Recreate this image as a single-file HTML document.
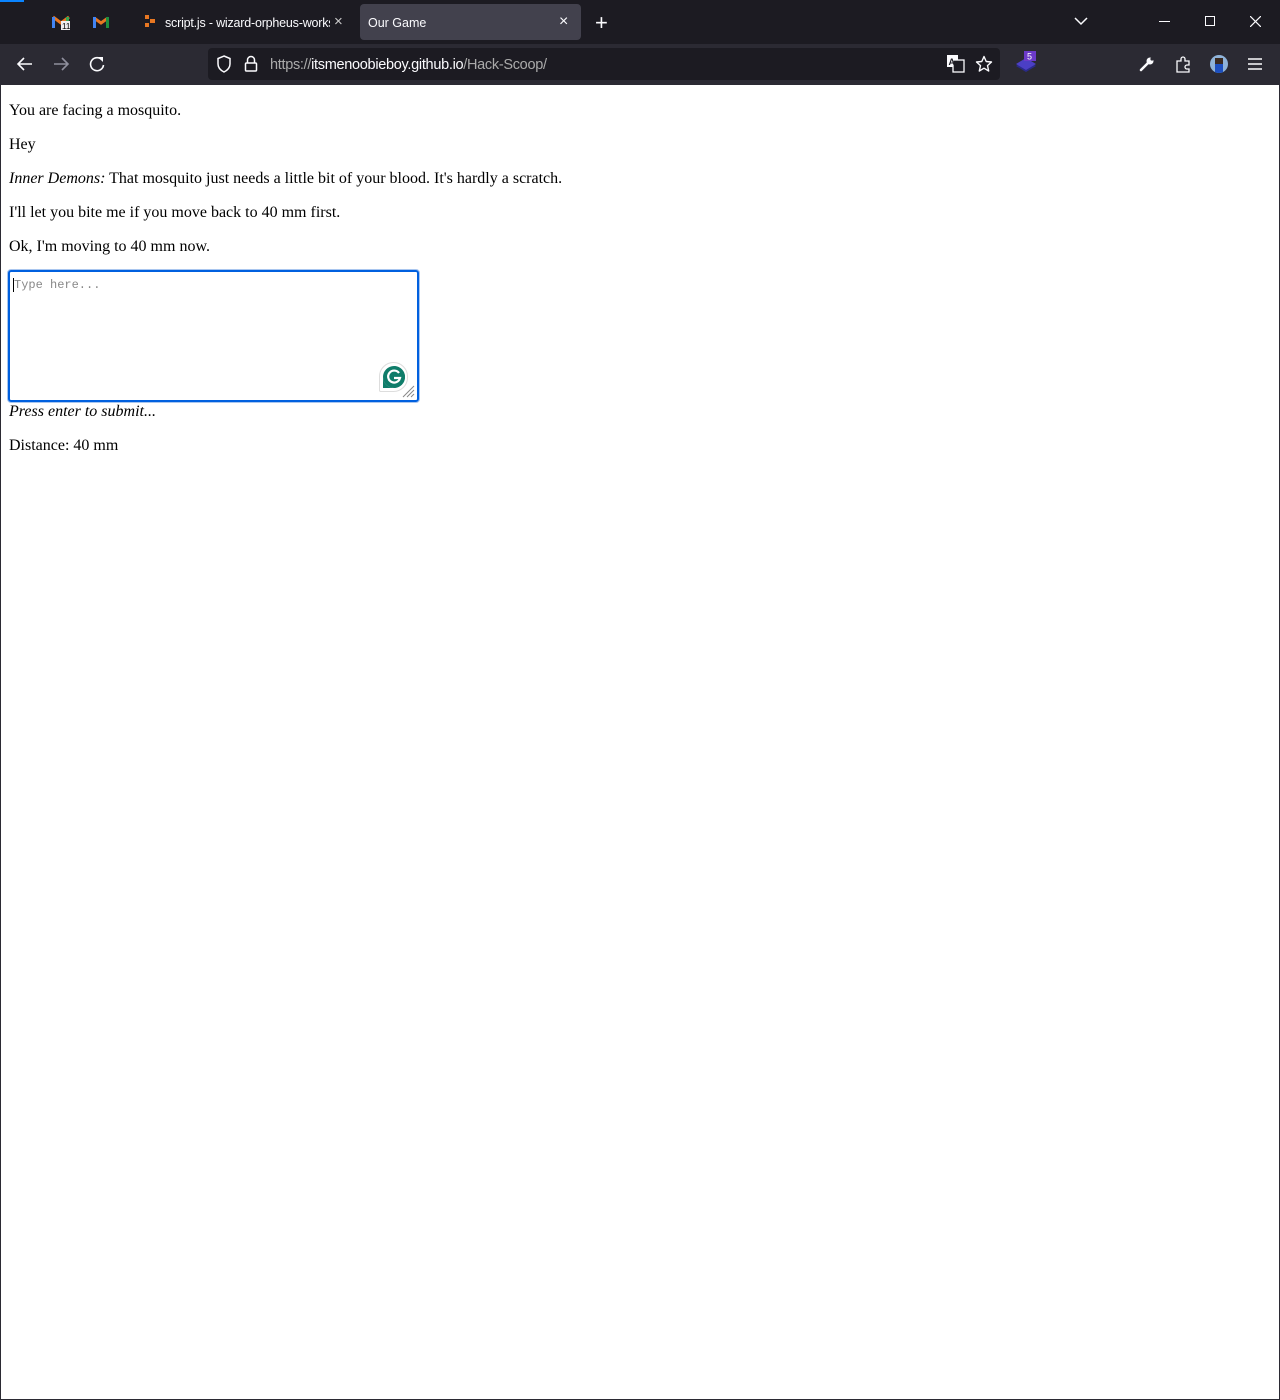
<!DOCTYPE html>
<html><head><meta charset="utf-8"><style>
*{box-sizing:border-box}
body{margin:0;width:1280px;height:1400px;position:relative;background:#fff;overflow:hidden;font-family:"Times New Roman","Liberation Serif",serif;font-size:16px}
.tabs{position:absolute;left:0;top:0;width:1280px;height:44px;background:#1c1b22}
.tool{position:absolute;left:0;top:44px;width:1280px;height:41px;background:#2b2a33}
.ui{font-family:"Liberation Sans",sans-serif;color:#fbfbfe;position:absolute}
.page{position:absolute;left:0;top:85px;width:1280px;height:1315px;border:1px solid #2b2a33;border-top:none}
.p{position:absolute;left:9px;line-height:18px;color:#000;white-space:nowrap}
</style></head><body>
<div class="tabs">
 <div style="position:absolute;left:0;top:0;width:24px;height:2px;background:#0a84ff"></div>
 <svg style="position:absolute;left:52px;top:14px" width="18" height="16"><path d="M1 3 L9 9 L17 3" stroke="#e87722" stroke-width="3" fill="none"/><rect x="0" y="3" width="3" height="11" fill="#4285f4"/><rect x="14" y="3" width="3" height="11" fill="#34a853"/><rect x="9" y="7" width="9" height="9" fill="#eee"/><text x="10" y="15" font-size="8" font-family="Liberation Sans">11</text></svg>
 <svg style="position:absolute;left:93px;top:15px" width="16" height="13"><path d="M1 3 L8 8 L15 3" stroke="#e87722" stroke-width="3" fill="none"/><rect x="0" y="2" width="3" height="11" fill="#4285f4"/><rect x="13" y="2" width="3" height="11" fill="#1e8e3e"/></svg>
 <svg style="position:absolute;left:145px;top:15px" width="12" height="12"><rect x="0" y="0" width="4" height="4" fill="#e87722"/><rect x="5" y="4" width="5" height="4" fill="#e87722"/><rect x="0" y="8" width="4" height="4" fill="#e87722"/></svg>
 <div class="ui" style="left:165px;top:16px;font-size:12.5px;width:165px;overflow:hidden;white-space:nowrap;letter-spacing:-0.2px">script.js - wizard-orpheus-works</div>
 <div class="ui" style="left:334px;top:13px;font-size:15px;color:#ccc">×</div>
 <div style="position:absolute;left:360px;top:4px;width:221px;height:36px;background:#42414d;border-radius:4px"></div>
 <div class="ui" style="left:368px;top:16px;font-size:12.5px">Our Game</div>
 <div class="ui" style="left:559px;top:13px;font-size:16px">×</div>
 <div class="ui" style="left:595px;top:10px;font-size:22px;font-weight:300">+</div>
 <svg style="position:absolute;left:1074px;top:17px" width="14" height="9"><path d="M1 1 L7 7 L13 1" stroke="#fbfbfe" stroke-width="1.5" fill="none"/></svg>
 <div style="position:absolute;left:1159px;top:21px;width:11px;height:1px;background:#fbfbfe"></div>
 <div style="position:absolute;left:1205px;top:16px;width:10px;height:10px;border:1px solid #fbfbfe"></div>
 <svg style="position:absolute;left:1250px;top:16px" width="11" height="11"><path d="M0 0 L11 11 M11 0 L0 11" stroke="#fbfbfe" stroke-width="1.2"/></svg>
</div>
<div class="tool">
 <svg style="position:absolute;left:16px;top:12px" width="18" height="16"><path d="M16 8 H2 M8 2 L2 8 L8 14" stroke="#fbfbfe" stroke-width="1.6" fill="none"/></svg>
 <svg style="position:absolute;left:52px;top:12px" width="18" height="16"><path d="M2 8 H16 M10 2 L16 8 L10 14" stroke="#8f8f9d" stroke-width="1.6" fill="none"/></svg>
 <svg style="position:absolute;left:88px;top:11px" width="18" height="18"><path d="M14 5 A6.5 6.5 0 1 0 15.5 10" stroke="#fbfbfe" stroke-width="1.6" fill="none"/><path d="M10 2 L15 2 L15 7 Z" fill="#fbfbfe"/></svg>
 <div style="position:absolute;left:208px;top:4px;width:792px;height:32px;background:#1c1b22;border-radius:4px"></div>
 <svg style="position:absolute;left:216px;top:11px" width="16" height="18"><path d="M8 1 L14 3.5 V9 C14 13 11 15.5 8 17 C5 15.5 2 13 2 9 V3.5 Z" stroke="#fbfbfe" stroke-width="1.5" fill="none"/></svg>
 <svg style="position:absolute;left:244px;top:11px" width="14" height="18"><path d="M3.5 8 V5 A3.5 3.5 0 0 1 10.5 5 V8" stroke="#fbfbfe" stroke-width="1.5" fill="none"/><rect x="1.5" y="8" width="11" height="8" rx="1" stroke="#fbfbfe" stroke-width="1.5" fill="none"/></svg>
 <div class="ui" style="left:270px;top:13px;font-size:14.5px;color:#aaa;white-space:nowrap;letter-spacing:-0.3px">https://<span style="color:#fbfbfe">itsmenoobieboy.github.io</span>/Hack-Scoop/</div>
 <svg style="position:absolute;left:947px;top:11px" width="18" height="18"><rect x="0" y="0" width="11" height="12" fill="#fbfbfe"/><rect x="6" y="5" width="11" height="12" fill="#1c1b22" stroke="#fbfbfe" stroke-width="1.3"/><text x="1.5" y="10" font-size="9" font-weight="bold" fill="#1c1b22" font-family="Liberation Sans">A</text></svg>
 <svg style="position:absolute;left:975px;top:11px" width="18" height="18"><path d="M9 1.5 L11.2 6.5 L16.5 7 L12.5 10.6 L13.7 16 L9 13.2 L4.3 16 L5.5 10.6 L1.5 7 L6.8 6.5 Z" stroke="#fbfbfe" stroke-width="1.4" fill="none" stroke-linejoin="round"/></svg>
 <svg style="position:absolute;left:1014px;top:6px" width="24" height="24"><path d="M2 16 L12 10 L22 16 L12 22 Z" fill="#2a2a8a"/><path d="M2 14 L12 8 L22 14 L12 20 Z" fill="#4b3fc5"/><rect x="10" y="1" width="12" height="10" fill="#6c3ac9"/><text x="13" y="9.5" font-size="9" fill="#fff" font-family="Liberation Sans">5</text></svg>
 <svg style="position:absolute;left:1139px;top:12px" width="16" height="16"><path d="M2 14 L9 7" stroke="#fbfbfe" stroke-width="2.5" stroke-linecap="round"/><circle cx="11" cy="5" r="3.5" fill="#fbfbfe"/><circle cx="13" cy="3" r="1.6" fill="#2b2a33"/></svg>
 <svg style="position:absolute;left:1176px;top:11px" width="16" height="18"><path d="M1 6 H5 V4 A2 2 0 0 1 9 4 V6 H13 V10 H11 A2 2 0 0 0 11 14 H13 V17 H1 Z" stroke="#fbfbfe" stroke-width="1.3" fill="none"/></svg>
 <div style="position:absolute;left:1210px;top:11px;width:18px;height:18px;border-radius:50%;background:#8fb3d9;overflow:hidden"><div style="position:absolute;left:5px;top:8px;width:8px;height:10px;background:#1c4fbf"></div><div style="position:absolute;left:5px;top:3px;width:8px;height:6px;background:#3a2a20"></div></div>
 <svg style="position:absolute;left:1248px;top:14px" width="14" height="12"><path d="M0 1 H14 M0 6 H14 M0 11 H14" stroke="#fbfbfe" stroke-width="1.4"/></svg>
</div>
<div class="page"></div>
<div class="p" style="top:102px">You are facing a mosquito.</div>
<div class="p" style="top:136px">Hey</div>
<div class="p" style="top:170px"><i>Inner Demons:</i> That mosquito just needs a little bit of your blood. It's hardly a scratch.</div>
<div class="p" style="top:204px">I'll let you bite me if you move back to 40 mm first.</div>
<div class="p" style="top:238px">Ok, I'm moving to 40 mm now.</div>
<div style="position:absolute;left:7px;top:269px;width:413px;height:134px;border:1px solid #a9c6ef;border-radius:4px"></div>
<div style="position:absolute;left:8px;top:270px;width:411px;height:132px;border:2px solid #0060df;border-radius:3px;background:#fff"></div>
<div style="position:absolute;left:13px;top:278px;font-family:'Liberation Mono',monospace;font-size:12px;color:#888;border-left:1px solid #000;padding-left:0">Type here...</div>
<div style="position:absolute;left:379px;top:362px;width:29px;height:30px;border:1px solid #ddd;border-radius:15px 15px 15px 2px;background:#fff"></div>
<svg style="position:absolute;left:382px;top:365px" width="24" height="24"><path d="M12 1 A11 11 0 1 1 1 12 V23 H12" fill="#0f7d6a"/><circle cx="12" cy="12" r="11" fill="#0f7d6a"/><path d="M17 8 A6 6 0 1 0 18 13 H12" stroke="#fff" stroke-width="2.2" fill="none"/></svg>
<svg style="position:absolute;left:400px;top:383px" width="15" height="15"><path d="M14 3 L3 14 M14 7 L7 14 M14 11 L11 14" stroke="#888" stroke-width="1"/></svg>
<div class="p" style="top:403px"><i>Press enter to submit...</i></div>
<div class="p" style="top:437px">Distance: 40 mm</div>
</body></html>
